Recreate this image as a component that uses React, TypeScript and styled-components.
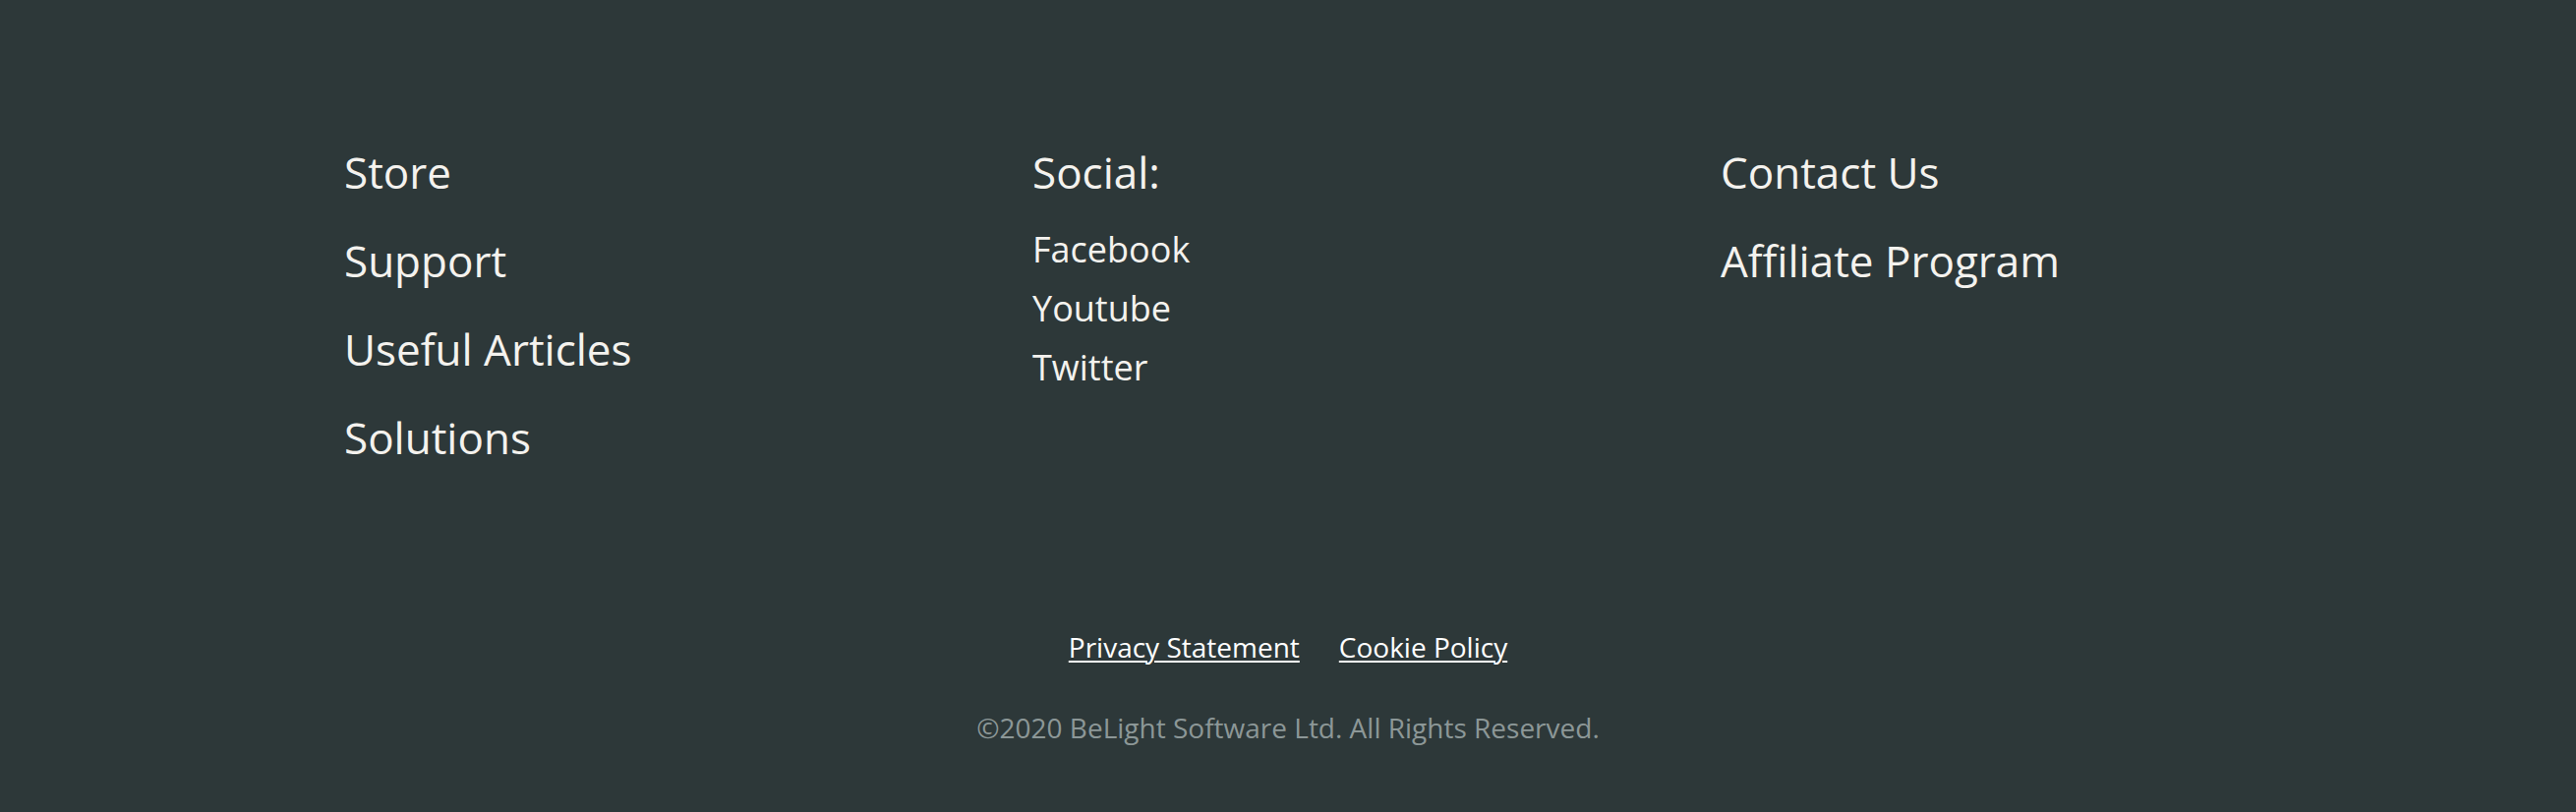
import React from "react";
import styled, { createGlobalStyle } from "styled-components";

const Global = createGlobalStyle`
  html, body {
    margin: 0;
    padding: 0;
    background: #2d3839;
  }
  body {
    font-family: "Open Sans", "Noto Sans", sans-serif;
  }
`;

const Footer = styled.footer`
  background: #2d3839;
  min-height: 826px;
  box-sizing: border-box;
  padding: 130px 0 66px;
  display: flex;
  flex-direction: column;
`;

const Columns = styled.div`
  display: grid;
  grid-template-columns: repeat(3, 700px);
  padding-left: 350px;
`;

const Column = styled.nav`
  display: flex;
  flex-direction: column;
`;

const MainLink = styled.a`
  display: block;
  font-size: 44px;
  line-height: 90px;
  color: #f4f2ee;
  text-decoration: none;
  white-space: nowrap;
`;

const Heading = styled.div`
  font-size: 44px;
  line-height: 90px;
  color: #f4f2ee;
  margin-bottom: 4px;
`;

const SubLink = styled.a`
  display: block;
  font-size: 36px;
  line-height: 60px;
  color: #f4f2ee;
  text-decoration: none;
`;

const Bottom = styled.div`
  margin-top: 148px;
  display: flex;
  flex-direction: column;
  align-items: center;
  gap: 42px;
`;

const LegalRow = styled.div`
  display: flex;
  gap: 40px;
`;

const LegalLink = styled.a`
  font-size: 28px;
  line-height: 40px;
  color: #ffffff;
  text-decoration: underline;
  text-decoration-thickness: 2px;
  text-underline-offset: 3px;
`;

const Copyright = styled.div`
  font-size: 28px;
  line-height: 40px;
  color: #8c9797;
`;

export default function App() {
  return (
    <>
      <Global />
      <Footer>
        <Columns>
          <Column>
            <MainLink href="#">Store</MainLink>
            <MainLink href="#">Support</MainLink>
            <MainLink href="#">Useful Articles</MainLink>
            <MainLink href="#">Solutions</MainLink>
          </Column>
          <Column>
            <Heading>Social:</Heading>
            <SubLink href="#">Facebook</SubLink>
            <SubLink href="#">Youtube</SubLink>
            <SubLink href="#">Twitter</SubLink>
          </Column>
          <Column>
            <MainLink href="#">Contact Us</MainLink>
            <MainLink href="#">Affiliate Program</MainLink>
          </Column>
        </Columns>
        <Bottom>
          <LegalRow>
            <LegalLink href="#">Privacy Statement</LegalLink>
            <LegalLink href="#">Cookie Policy</LegalLink>
          </LegalRow>
          <Copyright>©2020 BeLight Software Ltd. All Rights Reserved.</Copyright>
        </Bottom>
      </Footer>
    </>
  );
}
